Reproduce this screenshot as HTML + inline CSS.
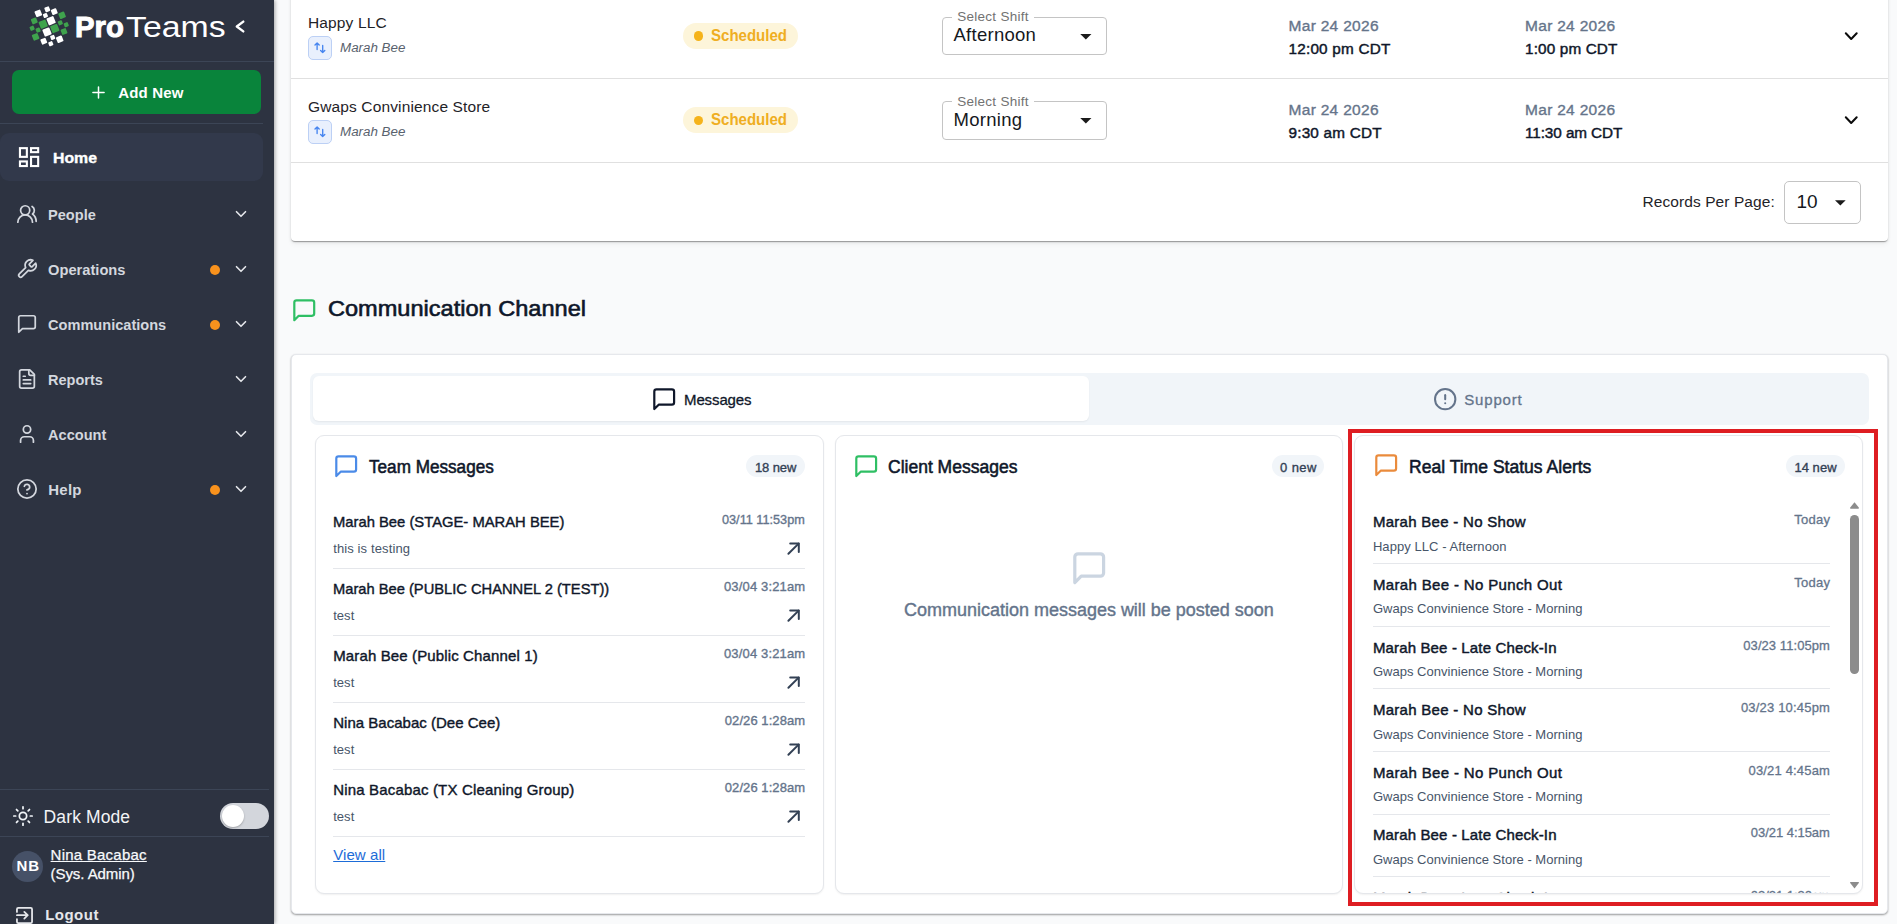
<!DOCTYPE html>
<html lang="en"><head><meta charset="utf-8"><title>ProTeams - Home</title>
<style>
html,body{margin:0;padding:0}
body{width:1897px;height:924px;overflow:hidden;position:relative;background:#f9fafb;font-family:"Liberation Sans", Arial, sans-serif}
.a{position:absolute;box-sizing:border-box}
.t{position:absolute;white-space:pre;font-family:"Liberation Sans", Arial, sans-serif}
svg{position:absolute;overflow:visible}

</style></head><body>
<div class="a" style="left:291px;top:-12px;width:1597px;height:253px;background:#fff;border-radius:4px;box-shadow:0 2px 1px -1px rgba(0,0,0,.2),0 1px 1px 0 rgba(0,0,0,.14),0 1px 3px 0 rgba(0,0,0,.12),0 4px 5px 0 rgba(0,0,0,.035)"></div>
<div class="a" style="left:291px;top:78px;width:1597px;height:1px;background:#e0e0e0;"></div>
<div class="a" style="left:291px;top:162px;width:1597px;height:1px;background:#e0e0e0;"></div>
<div class="a" style="left:308px;top:36.0px;width:24px;height:24px;background:#e9f0fd;border-radius:5px;border:1px solid #bcd0f5;"></div>
<svg style="left:314px;top:42.0px" width="13" height="12" viewBox="0 0 13 12" fill="none" stroke="#4685f0" stroke-width="1.35" stroke-linecap="round" stroke-linejoin="round"><path d="M3.1 7.6V1M1 3.1 3.1 1l2.1 2.1"/><path d="M8.7 3.5v7.1M6.6 8.5l2.1 2.1 2.1-2.1"/></svg>
<div class="a" style="left:683px;top:23.0px;width:115px;height:26px;background:#fdf5da;border-radius:13px;"></div>
<div class="a" style="left:693.8px;top:31.3px;width:9.5px;height:9.5px;background:#f5b31b;border-radius:5px;"></div>
<div class="a" style="left:942px;top:17.2px;width:165px;height:37.8px;border:1px solid #c4c4c4;border-radius:4px"></div>
<div class="a" style="left:952.3px;top:15.0px;width:81.7px;height:6px;background:#fff;"></div>
<svg style="left:1080.3px;top:34.0px" width="11.7" height="5.6" viewBox="0 0 10 5"><path d="M0 0h10L5 5z" fill="#1b1b1b"/></svg>
<svg style="left:1843px;top:28.0px" width="16" height="16" viewBox="0 0 16 16" fill="none" stroke="#0b0b0b" stroke-width="2" stroke-linecap="round" stroke-linejoin="round"><path d="M2.8 5.2 8.2 11 13.7 5.2"/></svg>
<div class="a" style="left:308px;top:120.3px;width:24px;height:24px;background:#e9f0fd;border-radius:5px;border:1px solid #bcd0f5;"></div>
<svg style="left:314px;top:126.3px" width="13" height="12" viewBox="0 0 13 12" fill="none" stroke="#4685f0" stroke-width="1.35" stroke-linecap="round" stroke-linejoin="round"><path d="M3.1 7.6V1M1 3.1 3.1 1l2.1 2.1"/><path d="M8.7 3.5v7.1M6.6 8.5l2.1 2.1 2.1-2.1"/></svg>
<div class="a" style="left:683px;top:107.3px;width:115px;height:26px;background:#fdf5da;border-radius:13px;"></div>
<div class="a" style="left:693.8px;top:115.6px;width:9.5px;height:9.5px;background:#f5b31b;border-radius:5px;"></div>
<div class="a" style="left:942px;top:101.4px;width:165px;height:38.3px;border:1px solid #c4c4c4;border-radius:4px"></div>
<div class="a" style="left:952.3px;top:99.3px;width:81.7px;height:6px;background:#fff;"></div>
<svg style="left:1080.3px;top:118.3px" width="11.7" height="5.6" viewBox="0 0 10 5"><path d="M0 0h10L5 5z" fill="#1b1b1b"/></svg>
<svg style="left:1843px;top:112.3px" width="16" height="16" viewBox="0 0 16 16" fill="none" stroke="#0b0b0b" stroke-width="2" stroke-linecap="round" stroke-linejoin="round"><path d="M2.8 5.2 8.2 11 13.7 5.2"/></svg>
<div class="a" style="left:1784px;top:181px;width:77px;height:43px;border:1px solid #c4c4c4;border-radius:5px"></div>
<svg style="left:1835px;top:200px" width="10.7" height="5.6" viewBox="0 0 10 5"><path d="M0 0h10L5 5z" fill="#1b1b1b"/></svg>
<svg style="left:290.8px;top:296.6px" width="26.5" height="26.5" viewBox="0 0 24 24" fill="none" stroke="#2fbf64" stroke-width="2" stroke-linecap="round" stroke-linejoin="round" ><path d="M21 15a2 2 0 0 1-2 2H7l-4 4V5a2 2 0 0 1 2-2h14a2 2 0 0 1 2 2z"/></svg>
<div class="a" style="left:291px;top:354px;width:1597px;height:559.5px;background:#fff;border:1px solid #e6e8ec;border-radius:5px;box-shadow:0 1px 2px rgba(0,0,0,.38)"></div>
<div class="a" style="left:309.5px;top:372.6px;width:1559.3px;height:52.8px;background:#f1f5f9;border-radius:7px;"></div>
<div class="a" style="left:312.7px;top:376.4px;width:776.6px;height:44.3px;background:#fff;border-radius:6px;box-shadow:0 1px 2px rgba(0,0,0,.06)"></div>
<svg style="left:651.2px;top:385.6px" width="26.4" height="26.4" viewBox="0 0 24 24" fill="none" stroke="#0f172a" stroke-width="2" stroke-linecap="round" stroke-linejoin="round" ><path d="M21 15a2 2 0 0 1-2 2H7l-4 4V5a2 2 0 0 1 2-2h14a2 2 0 0 1 2 2z"/></svg>
<svg style="left:1432.9px;top:387.1px" width="24.4" height="24.4" viewBox="0 0 24 24" fill="none" stroke="#64748b" stroke-width="2" stroke-linecap="round" stroke-linejoin="round" ><circle cx="12" cy="12" r="10"/><path d="M12 8v4"/><path d="M12 16h.01"/></svg>
<div class="a" style="left:315.2px;top:435.2px;width:508.5px;height:459.2px;background:#fff;border:1px solid #e5e7eb;border-radius:9px;box-shadow:0 1px 2px rgba(0,0,0,.06)"></div>
<div class="a" style="left:834.9px;top:435.2px;width:507.8px;height:459.2px;background:#fff;border:1px solid #e5e7eb;border-radius:9px;box-shadow:0 1px 2px rgba(0,0,0,.06)"></div>
<div class="a" style="left:1353.6px;top:435.2px;width:509px;height:459.2px;background:#fff;border:1px solid #e5e7eb;border-radius:9px;box-shadow:0 1px 2px rgba(0,0,0,.06)"></div>
<svg style="left:332.9px;top:452.7px" width="26.4" height="26.4" viewBox="0 0 24 24" fill="none" stroke="#4b8be8" stroke-width="2" stroke-linecap="round" stroke-linejoin="round" ><path d="M21 15a2 2 0 0 1-2 2H7l-4 4V5a2 2 0 0 1 2-2h14a2 2 0 0 1 2 2z"/></svg>
<div class="a" style="left:746px;top:455.2px;width:59.299999999999955px;height:21.8px;background:#f1f5f9;border-radius:11px;"></div>
<svg style="left:785px;top:539.5px" width="17" height="17" viewBox="0 0 17 17" fill="none" stroke="#334155" stroke-width="2" stroke-linecap="round" stroke-linejoin="round"><path d="M5.2 3.4h8.6v8.6"/><path d="M3.4 13.8 13.6 3.6"/></svg>
<div class="a" style="left:333px;top:568.2px;width:471.8px;height:1px;background:#e5e7eb;"></div>
<svg style="left:785px;top:606.5px" width="17" height="17" viewBox="0 0 17 17" fill="none" stroke="#334155" stroke-width="2" stroke-linecap="round" stroke-linejoin="round"><path d="M5.2 3.4h8.6v8.6"/><path d="M3.4 13.8 13.6 3.6"/></svg>
<div class="a" style="left:333px;top:635.2px;width:471.8px;height:1px;background:#e5e7eb;"></div>
<svg style="left:785px;top:673.5px" width="17" height="17" viewBox="0 0 17 17" fill="none" stroke="#334155" stroke-width="2" stroke-linecap="round" stroke-linejoin="round"><path d="M5.2 3.4h8.6v8.6"/><path d="M3.4 13.8 13.6 3.6"/></svg>
<div class="a" style="left:333px;top:702.2px;width:471.8px;height:1px;background:#e5e7eb;"></div>
<svg style="left:785px;top:740.5px" width="17" height="17" viewBox="0 0 17 17" fill="none" stroke="#334155" stroke-width="2" stroke-linecap="round" stroke-linejoin="round"><path d="M5.2 3.4h8.6v8.6"/><path d="M3.4 13.8 13.6 3.6"/></svg>
<div class="a" style="left:333px;top:769.2px;width:471.8px;height:1px;background:#e5e7eb;"></div>
<svg style="left:785px;top:807.5px" width="17" height="17" viewBox="0 0 17 17" fill="none" stroke="#334155" stroke-width="2" stroke-linecap="round" stroke-linejoin="round"><path d="M5.2 3.4h8.6v8.6"/><path d="M3.4 13.8 13.6 3.6"/></svg>
<div class="a" style="left:333px;top:836.2px;width:471.8px;height:1px;background:#e5e7eb;"></div>
<svg style="left:853px;top:453.3px" width="26.4" height="26.4" viewBox="0 0 24 24" fill="none" stroke="#2fbf64" stroke-width="2" stroke-linecap="round" stroke-linejoin="round" ><path d="M21 15a2 2 0 0 1-2 2H7l-4 4V5a2 2 0 0 1 2-2h14a2 2 0 0 1 2 2z"/></svg>
<div class="a" style="left:1272px;top:455.2px;width:52.40000000000009px;height:21.8px;background:#f1f5f9;border-radius:11px;"></div>
<svg style="left:1070px;top:549.2px" width="38.4" height="38.4" viewBox="0 0 24 24" fill="none" stroke="#cbd5e1" stroke-width="2" stroke-linecap="round" stroke-linejoin="round" ><path d="M21 15a2 2 0 0 1-2 2H7l-4 4V5a2 2 0 0 1 2-2h14a2 2 0 0 1 2 2z"/></svg>
<svg style="left:1372.8px;top:452.4px" width="26.4" height="26.4" viewBox="0 0 24 24" fill="none" stroke="#ea8b3c" stroke-width="2" stroke-linecap="round" stroke-linejoin="round" ><path d="M21 15a2 2 0 0 1-2 2H7l-4 4V5a2 2 0 0 1 2-2h14a2 2 0 0 1 2 2z"/></svg>
<div class="a" style="left:1786.3px;top:455.2px;width:58.40000000000009px;height:21.8px;background:#f1f5f9;border-radius:11px;"></div>
<div class="a" style="left:1373.3px;top:563px;width:456.4px;height:1px;background:#e5e7eb;"></div>
<div class="a" style="left:1373.3px;top:626px;width:456.4px;height:1px;background:#e5e7eb;"></div>
<div class="a" style="left:1373.3px;top:688px;width:456.4px;height:1px;background:#e5e7eb;"></div>
<div class="a" style="left:1373.3px;top:751px;width:456.4px;height:1px;background:#e5e7eb;"></div>
<div class="a" style="left:1373.3px;top:814px;width:456.4px;height:1px;background:#e5e7eb;"></div>
<div class="a" style="left:1373.3px;top:876px;width:456.4px;height:1px;background:#e5e7eb;"></div>
<svg style="left:1850px;top:502px" width="9" height="6.7" viewBox="0 0 9 6.7"><path d="M4.5 0.3 8.8 5.6a.7.7 0 0 1-.5 1.1H.7A.7.7 0 0 1 .2 5.6z" fill="#8c8c8c"/></svg>
<div class="a" style="left:1850.1px;top:515px;width:8.7px;height:159.4px;background:#8c8c8c;border-radius:4.4px;"></div>
<svg style="left:1850px;top:882px" width="9" height="6.7" viewBox="0 0 9 6.7"><path d="M4.5 6.4 8.8 1.1A.7.7 0 0 0 8.3 0H.7a.7.7 0 0 0-.5 1.1z" fill="#8c8c8c"/></svg>
<div class="a" style="left:1348px;top:429px;width:530px;height:477px;border:4px solid #de1d22"></div>
<div class="a" style="left:0;top:0;width:274px;height:924px;background:#2d3341;box-shadow:1px 0 4px rgba(0,0,0,.35)"></div>
<svg style="left:0;top:0" width="80" height="56" viewBox="0 0 80 56"><rect x="35.20" y="10.29" width="6.21" height="6.21" rx="0.9" fill="#fff" transform="rotate(-22 38.3 13.4)"/><rect x="44.83" y="6.83" width="4.94" height="4.94" rx="0.9" fill="#fff" transform="rotate(-22 47.3 9.3)"/><rect x="51.48" y="8.88" width="5.63" height="5.63" rx="0.9" fill="#fff" transform="rotate(-22 54.3 11.7)"/><rect x="43.21" y="13.31" width="4.37" height="4.37" rx="0.9" fill="#fff" transform="rotate(-22 45.4 15.5)"/><rect x="47.37" y="16.96" width="7.47" height="7.47" rx="0.9" fill="#fff" transform="rotate(-22 51.1 20.7)"/><rect x="59.00" y="12.20" width="6.21" height="6.21" rx="0.9" fill="#3fa34d" transform="rotate(-22 62.1 15.3)"/><rect x="58.11" y="20.62" width="4.37" height="4.37" rx="0.9" fill="#3fa34d" transform="rotate(-22 60.3 22.8)"/><rect x="64.02" y="22.52" width="4.37" height="4.37" rx="0.9" fill="#3fa34d" transform="rotate(-22 66.2 24.7)"/><rect x="61.19" y="28.68" width="5.63" height="5.63" rx="0.9" fill="#3fa34d" transform="rotate(-22 64 31.5)"/><rect x="51.06" y="24.77" width="7.47" height="7.47" rx="0.9" fill="#3fa34d" transform="rotate(-22 54.8 28.5)"/><rect x="31.48" y="18.08" width="5.63" height="5.63" rx="0.9" fill="#3fa34d" transform="rotate(-22 34.3 20.9)"/><rect x="29.92" y="26.02" width="4.37" height="4.37" rx="0.9" fill="#3fa34d" transform="rotate(-22 32.1 28.2)"/><rect x="35.91" y="27.92" width="4.37" height="4.37" rx="0.9" fill="#3fa34d" transform="rotate(-22 38.1 30.1)"/><rect x="32.50" y="33.80" width="6.21" height="6.21" rx="0.9" fill="#3fa34d" transform="rotate(-22 35.6 36.9)"/><rect x="39.47" y="20.46" width="7.47" height="7.47" rx="0.9" fill="#3fa34d" transform="rotate(-22 43.2 24.2)"/><rect x="43.27" y="28.27" width="7.47" height="7.47" rx="0.9" fill="#fff" transform="rotate(-22 47 32)"/><rect x="40.98" y="38.39" width="5.63" height="5.63" rx="0.9" fill="#fff" transform="rotate(-22 43.8 41.2)"/><rect x="48.61" y="41.52" width="4.37" height="4.37" rx="0.9" fill="#fff" transform="rotate(-22 50.8 43.7)"/><rect x="50.52" y="35.21" width="4.37" height="4.37" rx="0.9" fill="#fff" transform="rotate(-22 52.7 37.4)"/><rect x="56.60" y="36.20" width="6.21" height="6.21" rx="0.9" fill="#fff" transform="rotate(-22 59.7 39.3)"/></svg>
<svg style="left:232px;top:18px" width="16" height="17" viewBox="0 0 16 17" fill="none" stroke="#fff" stroke-width="2.4" stroke-linecap="round" stroke-linejoin="round"><path d="M11.3 3.6 4.8 8.5l6.5 4.9"/></svg>
<div class="a" style="left:0px;top:61px;width:274px;height:1px;background:#3c4556;"></div>
<div class="a" style="left:12px;top:70px;width:249px;height:44px;background:#09843b;border-radius:7px;"></div>
<svg style="left:92px;top:86px" width="13" height="13" viewBox="0 0 13 13" stroke="#fff" stroke-width="1.5" stroke-linecap="round"><path d="M6.5 0.9v11.2M0.9 6.5h11.2"/></svg>
<div class="a" style="left:0px;top:123px;width:263px;height:1px;background:#3c4556;"></div>
<div class="a" style="left:0px;top:133.4px;width:262.5px;height:47.6px;background:#32394b;border-radius:9px;"></div>
<svg style="left:18px;top:146px" width="23" height="23" viewBox="0 0 23 23" fill="none" stroke="#fff" stroke-width="2.1"><rect x="1.95" y="2.15" width="6.9" height="8.7"/><rect x="13.05" y="2.15" width="7.1" height="4"/><rect x="13.05" y="10.85" width="7.1" height="9.2"/><rect x="1.95" y="15.45" width="6.9" height="4.6"/></svg>
<svg style="left:15.7px;top:203.3px" width="22" height="22" viewBox="0 0 24 24" fill="none" stroke="#d3d7de" stroke-width="1.9" stroke-linecap="round" stroke-linejoin="round" ><path d="M18 21a8 8 0 0 0-16 0"/><circle cx="10" cy="8" r="5"/><path d="M22 20c0-3.37-2-6.5-4-8a5 5 0 0 0-.45-8.3"/></svg>
<svg style="left:232px;top:205.3px" width="18" height="18" viewBox="0 0 24 24" fill="none" stroke="#e5e7eb" stroke-width="2.2" stroke-linecap="round" stroke-linejoin="round" ><path d="m6 9 6 6 6-6"/></svg>
<svg style="left:15.7px;top:258.3px" width="22" height="22" viewBox="0 0 24 24" fill="none" stroke="#d3d7de" stroke-width="1.9" stroke-linecap="round" stroke-linejoin="round" ><path d="M14.7 6.3a1 1 0 0 0 0 1.4l1.6 1.6a1 1 0 0 0 1.4 0l3.77-3.77a6 6 0 0 1-7.94 7.94l-6.91 6.91a2.12 2.12 0 0 1-3-3l6.91-6.91a6 6 0 0 1 7.94-7.94l-3.76 3.76z"/></svg>
<svg style="left:232px;top:260.3px" width="18" height="18" viewBox="0 0 24 24" fill="none" stroke="#e5e7eb" stroke-width="2.2" stroke-linecap="round" stroke-linejoin="round" ><path d="m6 9 6 6 6-6"/></svg>
<div class="a" style="left:209.5px;top:264.6px;width:10px;height:10px;background:#f8921d;border-radius:5px;"></div>
<svg style="left:15.7px;top:313.3px" width="22" height="22" viewBox="0 0 24 24" fill="none" stroke="#d3d7de" stroke-width="1.9" stroke-linecap="round" stroke-linejoin="round" ><path d="M21 15a2 2 0 0 1-2 2H7l-4 4V5a2 2 0 0 1 2-2h14a2 2 0 0 1 2 2z"/></svg>
<svg style="left:232px;top:315.3px" width="18" height="18" viewBox="0 0 24 24" fill="none" stroke="#e5e7eb" stroke-width="2.2" stroke-linecap="round" stroke-linejoin="round" ><path d="m6 9 6 6 6-6"/></svg>
<div class="a" style="left:209.5px;top:319.6px;width:10px;height:10px;background:#f8921d;border-radius:5px;"></div>
<svg style="left:15.7px;top:368.3px" width="22" height="22" viewBox="0 0 24 24" fill="none" stroke="#d3d7de" stroke-width="1.9" stroke-linecap="round" stroke-linejoin="round" ><path d="M15 2H6a2 2 0 0 0-2 2v16a2 2 0 0 0 2 2h12a2 2 0 0 0 2-2V7Z"/><path d="M14 2v4a2 2 0 0 0 2 2h4"/><path d="M10 9H8"/><path d="M16 13H8"/><path d="M16 17H8"/></svg>
<svg style="left:232px;top:370.3px" width="18" height="18" viewBox="0 0 24 24" fill="none" stroke="#e5e7eb" stroke-width="2.2" stroke-linecap="round" stroke-linejoin="round" ><path d="m6 9 6 6 6-6"/></svg>
<svg style="left:15.7px;top:423.3px" width="22" height="22" viewBox="0 0 24 24" fill="none" stroke="#d3d7de" stroke-width="1.9" stroke-linecap="round" stroke-linejoin="round" ><path d="M19 21v-2a4 4 0 0 0-4-4H9a4 4 0 0 0-4 4v2"/><circle cx="12" cy="7" r="4"/></svg>
<svg style="left:232px;top:425.3px" width="18" height="18" viewBox="0 0 24 24" fill="none" stroke="#e5e7eb" stroke-width="2.2" stroke-linecap="round" stroke-linejoin="round" ><path d="m6 9 6 6 6-6"/></svg>
<svg style="left:15.7px;top:478.3px" width="22" height="22" viewBox="0 0 24 24" fill="none" stroke="#d3d7de" stroke-width="1.9" stroke-linecap="round" stroke-linejoin="round" ><circle cx="12" cy="12" r="10"/><path d="M9.09 9a3 3 0 0 1 5.83 1c0 2-3 3-3 3"/><path d="M12 17h.01"/></svg>
<svg style="left:232px;top:480.3px" width="18" height="18" viewBox="0 0 24 24" fill="none" stroke="#e5e7eb" stroke-width="2.2" stroke-linecap="round" stroke-linejoin="round" ><path d="m6 9 6 6 6-6"/></svg>
<div class="a" style="left:209.5px;top:484.6px;width:10px;height:10px;background:#f8921d;border-radius:5px;"></div>
<div class="a" style="left:0px;top:789px;width:268.5px;height:1px;background:#3c4556;"></div>
<div class="a" style="left:0px;top:836px;width:268.5px;height:1px;background:#3c4556;"></div>
<svg style="left:12px;top:805px" width="22" height="22" viewBox="0 0 24 24" fill="none" stroke="#f1f5f9" stroke-width="1.9" stroke-linecap="round" stroke-linejoin="round" ><circle cx="12" cy="12" r="4"/><path d="M12 2v2"/><path d="M12 20v2"/><path d="m4.93 4.93 1.41 1.41"/><path d="m17.66 17.66 1.41 1.41"/><path d="M2 12h2"/><path d="M20 12h2"/><path d="m6.34 17.66-1.41 1.41"/><path d="m19.07 4.93-1.41 1.41"/></svg>
<div class="a" style="left:219.9px;top:802.8px;width:49.1px;height:26.4px;background:#d3d6dc;border-radius:13.2px;"></div>
<div class="a" style="left:221.6px;top:804.7px;width:22.5px;height:22.5px;background:#fff;border-radius:50%;box-shadow:0 1px 2px rgba(0,0,0,.25)"></div>
<div class="a" style="left:12px;top:851px;width:31px;height:31px;background:#465167;border-radius:16px;"></div>
<svg style="left:16.3px;top:907.4px" width="17" height="17" viewBox="0 0 18 18" fill="none" stroke="#e5e7eb" stroke-width="1.9" stroke-linecap="round" stroke-linejoin="round"><path d="M1 5.2V2.4A1.4 1.4 0 0 1 2.4 1h13.2A1.4 1.4 0 0 1 17 2.4v13.2a1.4 1.4 0 0 1-1.4 1.4H2.4A1.4 1.4 0 0 1 1 15.6v-2.8"/><path d="M1 8.7h11.4M8.8 5.2l3.6 3.5-3.6 3.5"/></svg>
<span class="t" style="left:308.00px;top:14.75px;font-size:15.5px;line-height:15.5px;color:#1f2328;letter-spacing:0.132px;">Happy LLC</span>
<span class="t" style="left:339.80px;top:40.65px;font-size:13.7px;line-height:13.7px;color:#59626e;font-style:italic;transform:scaleX(0.9766);transform-origin:0 0;">Marah Bee</span>
<span class="t" style="left:710.80px;top:27.50px;font-size:16px;line-height:16px;color:#efae22;font-weight:700;transform:scaleX(0.9394);transform-origin:0 0;">Scheduled</span>
<span class="t" style="left:957.20px;top:9.75px;font-size:13.5px;line-height:13.5px;color:#727272;letter-spacing:0.282px;">Select Shift</span>
<span class="t" style="left:953.50px;top:26.25px;font-size:18.5px;line-height:18.5px;color:#15181d;letter-spacing:0.271px;">Afternoon</span>
<span class="t" style="left:1288.50px;top:17.95px;font-size:15.5px;line-height:15.5px;color:#65748a;-webkit-text-stroke:0.35px #65748a;letter-spacing:0.297px;">Mar 24 2026</span>
<span class="t" style="left:1288.50px;top:40.85px;font-size:15.3px;line-height:15.3px;color:#0f172a;-webkit-text-stroke:0.45px #0f172a;letter-spacing:0.212px;">12:00 pm CDT</span>
<span class="t" style="left:1525.00px;top:17.95px;font-size:15.5px;line-height:15.5px;color:#65748a;-webkit-text-stroke:0.35px #65748a;letter-spacing:0.297px;">Mar 24 2026</span>
<span class="t" style="left:1525.00px;top:40.85px;font-size:15.3px;line-height:15.3px;color:#0f172a;-webkit-text-stroke:0.45px #0f172a;letter-spacing:0.143px;">1:00 pm CDT</span>
<span class="t" style="left:308.00px;top:98.75px;font-size:15.5px;line-height:15.5px;color:#1f2328;letter-spacing:0.136px;">Gwaps Convinience Store</span>
<span class="t" style="left:339.80px;top:124.65px;font-size:13.7px;line-height:13.7px;color:#59626e;font-style:italic;transform:scaleX(0.9766);transform-origin:0 0;">Marah Bee</span>
<span class="t" style="left:710.80px;top:111.50px;font-size:16px;line-height:16px;color:#efae22;font-weight:700;transform:scaleX(0.9394);transform-origin:0 0;">Scheduled</span>
<span class="t" style="left:957.20px;top:94.75px;font-size:13.5px;line-height:13.5px;color:#727272;letter-spacing:0.282px;">Select Shift</span>
<span class="t" style="left:953.50px;top:111.25px;font-size:18.5px;line-height:18.5px;color:#15181d;letter-spacing:0.293px;">Morning</span>
<span class="t" style="left:1288.50px;top:102.25px;font-size:15.5px;line-height:15.5px;color:#65748a;-webkit-text-stroke:0.35px #65748a;letter-spacing:0.297px;">Mar 24 2026</span>
<span class="t" style="left:1288.50px;top:124.85px;font-size:15.3px;line-height:15.3px;color:#0f172a;-webkit-text-stroke:0.45px #0f172a;letter-spacing:0.203px;">9:30 am CDT</span>
<span class="t" style="left:1525.00px;top:102.25px;font-size:15.5px;line-height:15.5px;color:#65748a;-webkit-text-stroke:0.35px #65748a;letter-spacing:0.297px;">Mar 24 2026</span>
<span class="t" style="left:1525.00px;top:124.85px;font-size:15.3px;line-height:15.3px;color:#0f172a;-webkit-text-stroke:0.45px #0f172a;letter-spacing:-0.086px;">11:30 am CDT</span>
<span class="t" style="left:1642.50px;top:194.05px;font-size:15.5px;line-height:15.5px;color:#1f2328;letter-spacing:0.083px;">Records Per Page:</span>
<span class="t" style="left:1796.50px;top:192.40px;font-size:19px;line-height:19px;color:#15181d;">10</span>
<span class="t" style="left:328.00px;top:297.70px;font-size:21.6px;line-height:21.6px;color:#0f172a;-webkit-text-stroke:0.6px #0f172a;transform:scaleX(1.0911);transform-origin:0 0;">Communication Channel</span>
<span class="t" style="left:684.00px;top:391.90px;font-size:15px;line-height:15px;color:#0f172a;-webkit-text-stroke:0.3px #0f172a;letter-spacing:-0.111px;">Messages</span>
<span class="t" style="left:1464.20px;top:392.10px;font-size:15px;line-height:15px;color:#64748b;-webkit-text-stroke:0.3px #64748b;letter-spacing:0.842px;">Support</span>
<span class="t" style="left:368.70px;top:458.40px;font-size:18px;line-height:18px;color:#0f172a;-webkit-text-stroke:0.55px #0f172a;transform:scaleX(0.9522);transform-origin:0 0;">Team Messages</span>
<span class="t" style="left:754.95px;top:461.00px;font-size:13px;line-height:13px;color:#334155;-webkit-text-stroke:0.35px #334155;letter-spacing:-0.104px;">18 new</span>
<span class="t" style="left:333.20px;top:514.00px;font-size:15px;line-height:15px;color:#0f172a;-webkit-text-stroke:0.4px #0f172a;transform:scaleX(0.9856);transform-origin:0 0;">Marah Bee (STAGE- MARAH BEE)</span>
<span class="t" style="left:722.30px;top:513.00px;font-size:13px;line-height:13px;color:#64748b;-webkit-text-stroke:0.35px #64748b;transform:scaleX(0.9763);transform-origin:0 0;">03/11 11:53pm</span>
<span class="t" style="left:333.20px;top:542.00px;font-size:13px;line-height:13px;color:#475569;letter-spacing:0.117px;">this is testing</span>
<span class="t" style="left:333.20px;top:581.00px;font-size:15px;line-height:15px;color:#0f172a;-webkit-text-stroke:0.4px #0f172a;transform:scaleX(0.9794);transform-origin:0 0;">Marah Bee (PUBLIC CHANNEL 2 (TEST))</span>
<span class="t" style="left:724.00px;top:580.00px;font-size:13px;line-height:13px;color:#64748b;-webkit-text-stroke:0.35px #64748b;letter-spacing:0.144px;">03/04 3:21am</span>
<span class="t" style="left:333.20px;top:609.00px;font-size:13px;line-height:13px;color:#475569;letter-spacing:0.044px;">test</span>
<span class="t" style="left:333.20px;top:648.00px;font-size:15px;line-height:15px;color:#0f172a;-webkit-text-stroke:0.4px #0f172a;letter-spacing:0.131px;">Marah Bee (Public Channel 1)</span>
<span class="t" style="left:724.00px;top:647.00px;font-size:13px;line-height:13px;color:#64748b;-webkit-text-stroke:0.35px #64748b;letter-spacing:0.144px;">03/04 3:21am</span>
<span class="t" style="left:333.20px;top:676.00px;font-size:13px;line-height:13px;color:#475569;letter-spacing:0.044px;">test</span>
<span class="t" style="left:333.20px;top:715.00px;font-size:15px;line-height:15px;color:#0f172a;-webkit-text-stroke:0.4px #0f172a;letter-spacing:0.016px;">Nina Bacabac (Dee Cee)</span>
<span class="t" style="left:724.80px;top:714.00px;font-size:13px;line-height:13px;color:#64748b;-webkit-text-stroke:0.35px #64748b;letter-spacing:0.071px;">02/26 1:28am</span>
<span class="t" style="left:333.20px;top:743.00px;font-size:13px;line-height:13px;color:#475569;letter-spacing:0.044px;">test</span>
<span class="t" style="left:333.20px;top:782.00px;font-size:15px;line-height:15px;color:#0f172a;-webkit-text-stroke:0.4px #0f172a;letter-spacing:0.166px;">Nina Bacabac (TX Cleaning Group)</span>
<span class="t" style="left:724.80px;top:781.00px;font-size:13px;line-height:13px;color:#64748b;-webkit-text-stroke:0.35px #64748b;letter-spacing:0.071px;">02/26 1:28am</span>
<span class="t" style="left:333.20px;top:810.00px;font-size:13px;line-height:13px;color:#475569;letter-spacing:0.044px;">test</span>
<span class="t" style="left:333.20px;top:847.00px;font-size:15px;line-height:15px;color:#1d6cd8;text-decoration:underline;letter-spacing:0.083px;">View all</span>
<span class="t" style="left:888.00px;top:458.20px;font-size:18px;line-height:18px;color:#0f172a;-webkit-text-stroke:0.55px #0f172a;transform:scaleX(0.9725);transform-origin:0 0;">Client Messages</span>
<span class="t" style="left:1280.10px;top:461.00px;font-size:13px;line-height:13px;color:#334155;-webkit-text-stroke:0.35px #334155;letter-spacing:0.374px;">0 new</span>
<span class="t" style="left:904.00px;top:601.20px;font-size:18px;line-height:18px;color:#64748b;-webkit-text-stroke:0.4px #64748b;letter-spacing:-0.009px;">Communication messages will be posted soon</span>
<span class="t" style="left:1408.80px;top:458.10px;font-size:18px;line-height:18px;color:#0f172a;-webkit-text-stroke:0.55px #0f172a;transform:scaleX(0.9750);transform-origin:0 0;">Real Time Status Alerts</span>
<span class="t" style="left:1794.45px;top:461.00px;font-size:13px;line-height:13px;color:#334155;-webkit-text-stroke:0.35px #334155;letter-spacing:0.036px;">14 new</span>
<span class="t" style="left:1372.90px;top:514.00px;font-size:15px;line-height:15px;color:#0f172a;-webkit-text-stroke:0.45px #0f172a;letter-spacing:0.290px;">Marah Bee - No Show</span>
<span class="t" style="left:1794.30px;top:513.00px;font-size:13px;line-height:13px;color:#64748b;-webkit-text-stroke:0.3px #64748b;letter-spacing:0.224px;">Today</span>
<span class="t" style="left:1372.90px;top:540.00px;font-size:13px;line-height:13px;color:#475569;letter-spacing:0.068px;">Happy LLC - Afternoon</span>
<span class="t" style="left:1372.90px;top:577.00px;font-size:15px;line-height:15px;color:#0f172a;-webkit-text-stroke:0.45px #0f172a;letter-spacing:0.351px;">Marah Bee - No Punch Out</span>
<span class="t" style="left:1794.30px;top:576.00px;font-size:13px;line-height:13px;color:#64748b;-webkit-text-stroke:0.3px #64748b;letter-spacing:0.224px;">Today</span>
<span class="t" style="left:1372.90px;top:602.00px;font-size:13px;line-height:13px;color:#475569;letter-spacing:0.024px;">Gwaps Convinience Store - Morning</span>
<span class="t" style="left:1372.90px;top:640.00px;font-size:15px;line-height:15px;color:#0f172a;-webkit-text-stroke:0.45px #0f172a;letter-spacing:0.146px;">Marah Bee - Late Check-In</span>
<span class="t" style="left:1743.30px;top:639.00px;font-size:13px;line-height:13px;color:#64748b;-webkit-text-stroke:0.3px #64748b;letter-spacing:0.068px;">03/23 11:05pm</span>
<span class="t" style="left:1372.90px;top:665.00px;font-size:13px;line-height:13px;color:#475569;letter-spacing:0.024px;">Gwaps Convinience Store - Morning</span>
<span class="t" style="left:1372.90px;top:702.00px;font-size:15px;line-height:15px;color:#0f172a;-webkit-text-stroke:0.45px #0f172a;letter-spacing:0.290px;">Marah Bee - No Show</span>
<span class="t" style="left:1740.90px;top:701.00px;font-size:13px;line-height:13px;color:#64748b;-webkit-text-stroke:0.3px #64748b;letter-spacing:0.189px;">03/23 10:45pm</span>
<span class="t" style="left:1372.90px;top:728.00px;font-size:13px;line-height:13px;color:#475569;letter-spacing:0.024px;">Gwaps Convinience Store - Morning</span>
<span class="t" style="left:1372.90px;top:765.00px;font-size:15px;line-height:15px;color:#0f172a;-webkit-text-stroke:0.45px #0f172a;letter-spacing:0.351px;">Marah Bee - No Punch Out</span>
<span class="t" style="left:1748.50px;top:764.00px;font-size:13px;line-height:13px;color:#64748b;-webkit-text-stroke:0.3px #64748b;letter-spacing:0.171px;">03/21 4:45am</span>
<span class="t" style="left:1372.90px;top:790.00px;font-size:13px;line-height:13px;color:#475569;letter-spacing:0.024px;">Gwaps Convinience Store - Morning</span>
<span class="t" style="left:1372.90px;top:827.00px;font-size:15px;line-height:15px;color:#0f172a;-webkit-text-stroke:0.45px #0f172a;letter-spacing:0.146px;">Marah Bee - Late Check-In</span>
<span class="t" style="left:1750.80px;top:826.00px;font-size:13px;line-height:13px;color:#64748b;-webkit-text-stroke:0.3px #64748b;letter-spacing:-0.038px;">03/21 4:15am</span>
<span class="t" style="left:1372.90px;top:853.00px;font-size:13px;line-height:13px;color:#475569;letter-spacing:0.024px;">Gwaps Convinience Store - Morning</span>
<span class="t" style="left:1372.90px;top:890.00px;font-size:15px;line-height:15px;color:#0f172a;-webkit-text-stroke:0.45px #0f172a;letter-spacing:0.146px;clip-path:inset(0 0 12.00px 0);">Marah Bee - Late Check-In</span>
<span class="t" style="left:1750.80px;top:889.00px;font-size:13px;line-height:13px;color:#64748b;-webkit-text-stroke:0.3px #64748b;letter-spacing:-0.038px;clip-path:inset(0 0 9.00px 0);">03/21 1:30am</span>
<span class="t" style="left:75.40px;top:11.85px;font-size:30.3px;line-height:30.3px;color:#fff;font-weight:700;-webkit-text-stroke:1.0px #fff;transform:scaleX(0.9660);transform-origin:0 0;">Pro</span>
<span class="t" style="left:126.00px;top:11.85px;font-size:30.3px;line-height:30.3px;color:#fff;transform:scaleX(1.1162);transform-origin:0 0;">Teams</span>
<span class="t" style="left:118.20px;top:84.60px;font-size:15px;line-height:15px;color:#fff;font-weight:700;letter-spacing:0.171px;">Add New</span>
<span class="t" style="left:53.00px;top:150.70px;font-size:14.6px;line-height:14.6px;color:#fff;font-weight:700;-webkit-text-stroke:0.35px #fff;transform:scaleX(1.0852);transform-origin:0 0;">Home</span>
<span class="t" style="left:48.30px;top:207.10px;font-size:15px;line-height:15px;color:#d3d7de;font-weight:700;transform:scaleX(0.9718);transform-origin:0 0;">People</span>
<span class="t" style="left:48.30px;top:262.10px;font-size:15px;line-height:15px;color:#d3d7de;font-weight:700;transform:scaleX(0.9787);transform-origin:0 0;">Operations</span>
<span class="t" style="left:48.30px;top:317.10px;font-size:15px;line-height:15px;color:#d3d7de;font-weight:700;transform:scaleX(0.9713);transform-origin:0 0;">Communications</span>
<span class="t" style="left:48.30px;top:372.10px;font-size:15px;line-height:15px;color:#d3d7de;font-weight:700;transform:scaleX(0.9667);transform-origin:0 0;">Reports</span>
<span class="t" style="left:48.30px;top:427.10px;font-size:15px;line-height:15px;color:#d3d7de;font-weight:700;transform:scaleX(0.9717);transform-origin:0 0;">Account</span>
<span class="t" style="left:48.30px;top:482.10px;font-size:15px;line-height:15px;color:#d3d7de;font-weight:700;letter-spacing:0.228px;">Help</span>
<span class="t" style="left:43.60px;top:808.95px;font-size:17.5px;line-height:17.5px;color:#f3f4f6;letter-spacing:0.113px;">Dark Mode</span>
<span class="t" style="left:16.60px;top:858.00px;font-size:15px;line-height:15px;color:#fff;font-weight:700;letter-spacing:0.728px;">NB</span>
<span class="t" style="left:50.60px;top:847.00px;font-size:15px;line-height:15px;color:#f8fafc;text-decoration:underline;-webkit-text-stroke:0.25px #f8fafc;letter-spacing:0.236px;">Nina Bacabac</span>
<span class="t" style="left:50.60px;top:865.50px;font-size:15px;line-height:15px;color:#f8fafc;-webkit-text-stroke:0.25px #f8fafc;letter-spacing:-0.076px;">(Sys. Admin)</span>
<span class="t" style="left:45.20px;top:907.00px;font-size:15px;line-height:15px;color:#e5e7eb;font-weight:700;letter-spacing:0.478px;">Logout</span>

</body></html>
